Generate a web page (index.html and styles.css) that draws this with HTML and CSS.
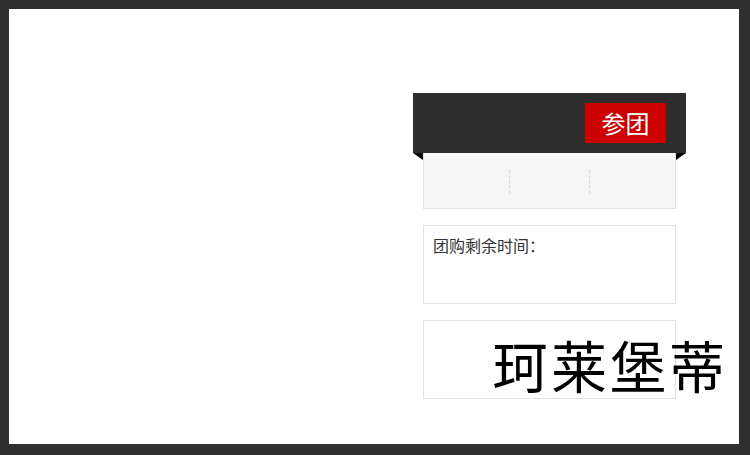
FILE: index.html
```html
<!DOCTYPE html>
<html lang="zh-CN">
<head>
    <meta charset="UTF-8">
    <title>团购</title>
    <link rel="stylesheet" href="styles.css">
</head>
<body>
    <div class="frame">
        <div class="panel">
            <div class="panel-head">
                <a class="join-btn" href="#">参团</a>
            </div>
            <div class="panel-body">
                <div class="count-box">
                    <div class="count-cell"></div>
                    <div class="count-cell"></div>
                    <div class="count-cell"></div>
                </div>
                <div class="info-box">
                    <p class="remain">团购剩余时间：</p>
                </div>
                <div class="info-box">
                    <p class="brand">珂莱堡蒂</p>
                </div>
            </div>
        </div>
    </div>
</body>
</html>
```
FILE: styles.css
```css
body { margin: 0; background-color: #2f2f2f; font-family: "Noto Sans CJK SC", "Noto Sans", sans-serif; }
.frame { width: 730px; height: 435px; margin: 9px 0 0 9px; background-color: #ffffff; overflow: hidden; }
.panel { width: 273px; margin: 84px 0 0 404px; }
.panel-head { height: 60px; background-color: #2e2e2e; display: flex; justify-content: flex-end; align-items: flex-start; padding-right: 20px; position: relative; }
.panel-head::before, .panel-head::after {
    content: ""; position: absolute; top: 60px; width: 0; height: 0;
    border-top: 7px solid #000;
}
.panel-head::before { left: 0; border-left: 10px solid transparent; }
.panel-head::after { right: 0; border-right: 10px solid transparent; }
.join-btn {
    display: block; width: 81px; height: 40px; margin-top: 10px; background-color: #cc0000;
    color: #fff; text-decoration: none; font-size: 24px; line-height: 40px; text-align: center;
}
.panel-body { padding: 0 10px; display: flex; flex-direction: column; gap: 16px; }
.count-box { height: 52px; border: 1px solid #e2e2e2; border-top: none; background-color: #f6f6f6; display: flex; align-items: center; padding-top: 3px; }
.count-cell { width: 85px; height: 24px; }
.count-cell + .count-cell { width: 79px; border-left: 1px dashed #d6d6d6; }
.count-cell:last-child { flex: 1; }
.info-box { height: 77px; border: 1px solid #e2e2e2; }
.remain { margin: 0; padding: 7px 0 0 9px; font-size: 16px; line-height: 24px; color: #333; }
.brand { margin: 0; padding: 15px 0 0 68px; font-size: 56px; line-height: 56px; letter-spacing: 3px; color: #000; white-space: nowrap; }
```
